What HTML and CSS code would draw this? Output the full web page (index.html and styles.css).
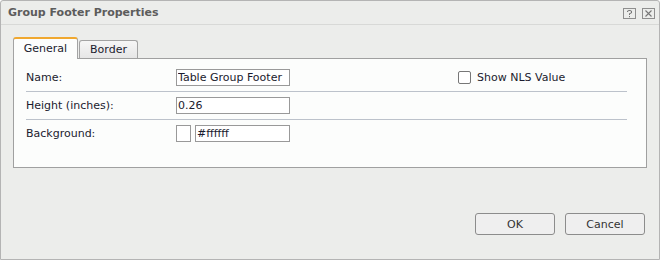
FILE: index.html
```html
<!DOCTYPE html>
<html lang="en">
<head>
    <meta charset="UTF-8">
    <title>Group Footer Properties</title>
    <link rel="stylesheet" href="styles.css">
</head>
<body>
    <div class="dialog">
        <div class="dialog-header">
            <div class="dialog-title">Group Footer Properties</div>
            <div class="header-tools">
                <span class="tool-btn">
                    <svg width="9" height="9" viewBox="0 0 9 9"><path d="M2.5 3 V2 H3.5 V1.5 H5.5 V2 H6.5 V4 H5.5 V4.5 H4.5 V6" fill="none" stroke="#777" stroke-width="1"/><rect x="4" y="7" width="1" height="1.2" fill="#777"/></svg>
                </span>
                <span class="tool-btn">
                    <svg width="9" height="9" viewBox="0 0 9 9"><path d="M1.5 1.5 L7.5 7.5 M7.5 1.5 L1.5 7.5" stroke="#777" stroke-width="1.1"/></svg>
                </span>
            </div>
        </div>

        <div class="dialog-body">
            <div class="tabs">
                <div class="tab active">General</div>
                <div class="tab">Border</div>
            </div>
            <div class="tab-panel">
                <div class="form-row">
                    <span class="label">Name:</span>
                    <input class="text-input" type="text" value="Table Group Footer">
                    <label class="check">
                        <span class="check-box"></span>
                        Show NLS Value
                    </label>
                </div>
                <div class="form-row">
                    <span class="label">Height (inches):</span>
                    <input class="text-input" type="text" value="0.26">
                </div>
                <div class="form-row last">
                    <span class="label">Background:</span>
                    <span class="swatch"></span>
                    <input class="text-input color-input" type="text" value="#ffffff">
                </div>
            </div>
        </div>

        <div class="dialog-footer">
            <button class="btn">OK</button>
            <button class="btn">Cancel</button>
        </div>
    </div>
</body>
</html>
```

FILE: styles.css
```css
/* Reset some default styles */
* {
    box-sizing: border-box;
    margin: 0;
    padding: 0;
}

body {
    font-family: 'DejaVu Sans', Verdana, sans-serif;
    font-size: 11px;
    background-color: #fff;
}

.dialog {
    width: 660px;
    height: 260px;
    border: 1px solid #b4b4b4;
    border-radius: 3px 3px 0 0;
    background-color: #ecedeb;
    display: flex;
    flex-direction: column;
}

.dialog-header {
    height: 24px;
    border-bottom: 1px solid #d8d9d7;
    display: flex;
    align-items: center;
    justify-content: space-between;
    padding: 0 4px 0 7px;
}

.dialog-title {
    font-weight: 700;
    font-size: 11px;
    color: #5c5c5c;
}

.header-tools {
    display: flex;
    gap: 6px;
    margin-top: 2px;
}

.tool-btn {
    width: 13px;
    height: 11px;
    border: 1px solid #8e8e8e;
    display: flex;
    align-items: center;
    justify-content: center;
}

.dialog-body {
    padding: 12px 12px 0 12px;
}

.tabs {
    display: flex;
    align-items: flex-end;
    gap: 1px;
    height: 21px;
}

.tab {
    width: 59px;
    height: 18px;
    border: 1px solid #a3a3a3;
    border-bottom: none;
    border-radius: 3px 3px 0 0;
    background: linear-gradient(#f6f6f6, #e6e6e6);
    color: #1b1b2e;
    text-align: center;
    line-height: 17px;
}

.tab.active {
    width: 65px;
    height: 22px;
    margin-bottom: -1px;
    border-top: 2px solid #f0a830;
    background: #fcfdfc;
    line-height: 19px;
    position: relative;
}

.tab-panel {
    border: 1px solid #a0a0a0;
    background-color: #fcfdfc;
    padding: 5px 19px 20px 12px;
}

.form-row {
    height: 28px;
    display: flex;
    align-items: center;
    border-bottom: 1px solid #bcc2cb;
    color: #1b1b2e;
}

.form-row.last {
    border-bottom: none;
    height: 27px;
}

.label {
    width: 150px;
}

.text-input {
    width: 114px;
    height: 17px;
    border: 1px solid #999;
    padding: 0 1px;
    font-family: inherit;
    font-size: 11px;
    color: #1b1b2e;
    background: #fff;
    outline: none;
}

.color-input {
    width: 95px;
}

.swatch {
    width: 15px;
    height: 17px;
    border: 1px solid #999;
    background: #fff;
    margin-right: 4px;
}

.check {
    margin-left: auto;
    margin-right: 19px;
    display: flex;
    align-items: center;
    gap: 6px;
    width: 150px;
}

.check-box {
    width: 13px;
    height: 13px;
    border: 1px solid #777;
    border-radius: 2px;
    background: #fff;
}

.dialog-footer {
    margin-top: auto;
    display: flex;
    justify-content: flex-end;
    gap: 10px;
    padding: 0 14px 24px 0;
}

.btn {
    width: 80px;
    height: 22px;
    border: 1px solid #8c8c8c;
    border-radius: 3px;
    background: #efefef;
    font-family: inherit;
    font-size: 11px;
    color: #333;
}
```
